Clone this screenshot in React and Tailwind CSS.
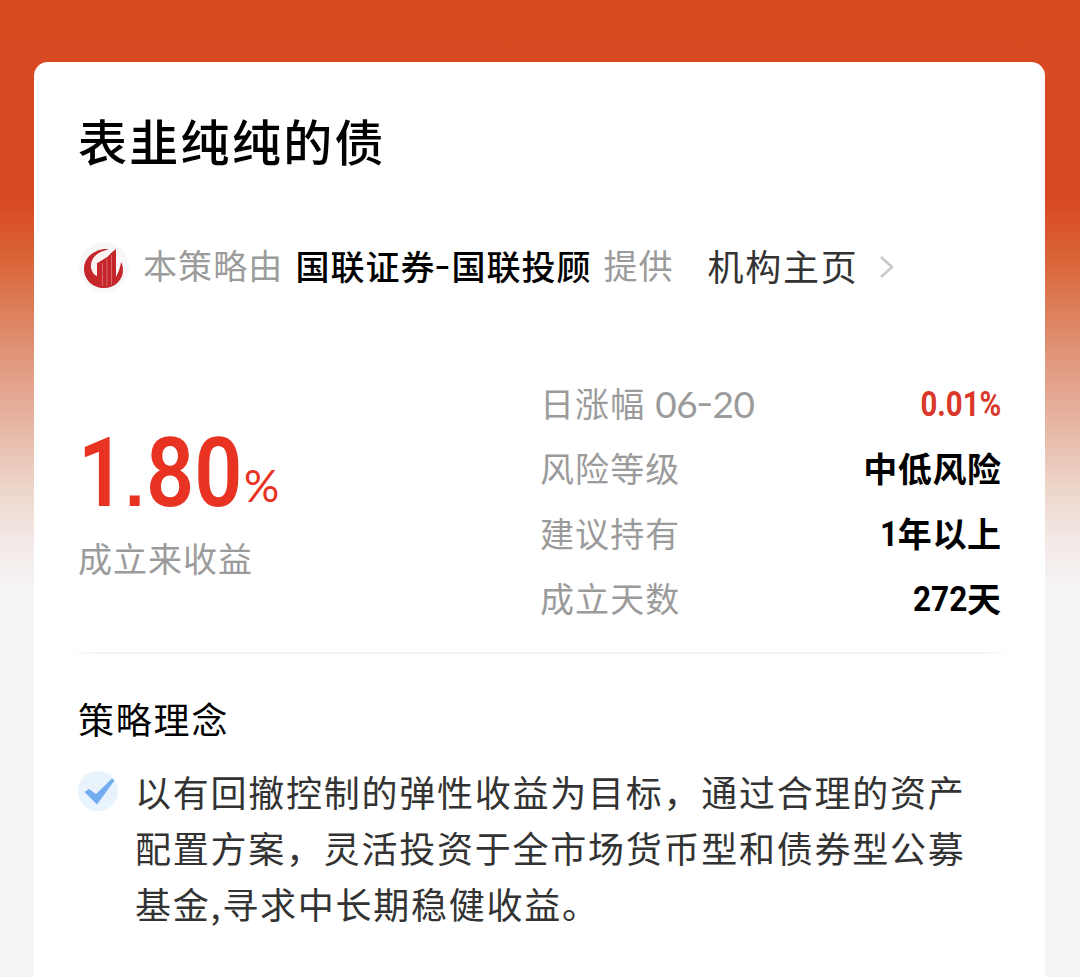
import React from "react";

const stats = [
  { label: "日涨幅", date: ["06", "20"], num: "0.01%", red: true },
  { label: "风险等级", text: "中低风险" },
  { label: "建议持有", num: "1", text: "年以上" },
  { label: "成立天数", num: "272", text: "天" },
];

const idea = [
  "以有回撤控制的弹性收益为目标，通过合理的资产",
  "配置方案，灵活投资于全市场货币型和债券型公募",
  "基金,寻求中长期稳健收益。",
];

function Logo() {
  return (
    <svg className="h-[52px] w-[52px] shrink-0" viewBox="0 0 52 52">
      <circle cx="26" cy="26" r="25" fill="#f8f7f7" />
      <path d="M31 8C17 7 6 16 6 28c0 11 9 19 20 19 11 0 19-8 19-18 0-4-1-6-2-8-1 7-3 11-5 15V8l-5 4-4 4-5 3-5 3v12c-6-6-3-21 12-26z" fill="#c4262b" />
      <path d="M30 9C19 10 12 18 13 27c1 4 3 7 6 8V22l10-6 4-4z" fill="#fbf3f2" />
      <path d="M24.500 22v23M29 18v27M33.500 14v30" stroke="#dd6468" strokeWidth="1" />
    </svg>
  );
}

function Check() {
  return (
    <svg className="mt-[8px] h-10 w-10 shrink-0" viewBox="0 0 40 40">
      <circle cx="20" cy="20" r="20" fill="#e8f3fd" />
      <path d="M6.500 21l4.500-3 7 5L34 7.500l2.500 2L19 33.500z" fill="#72adf0" />
    </svg>
  );
}

export default function App() {
  return (
    <div className="h-[977px] w-[1080px] overflow-hidden bg-[#f5f5f5] bg-[linear-gradient(180deg,#d94922_0px,#d84822_200px,#da6539_260px,#dc7e5a_310px,#e29c84_370px,#e8bdac_440px,#edd6cb_490px,#f3e9e6_540px,#f5f5f5_590px)] pl-[34px] pr-[35px] pt-[62px] font-['Noto_Sans_CJK_SC',sans-serif] whitespace-nowrap text-black">
      <main className="flex h-[930px] flex-col rounded-t-[14px] bg-white px-[44px]">
        <h1 className="mt-[42px] h-[72px] text-[49px] leading-[72px] font-medium tracking-[2.3px]">表韭纯纯的债</h1>

        <div className="mt-[63px] flex h-[56px] items-center text-[34px] leading-[56px]">
          <Logo />
          <span className="-mt-[5px] ml-[13px] text-[#9b9b9b] tracking-[1.1px]">本策略由</span>
          <span className="-mt-[3px] ml-[12px] flex font-medium tracking-[1px]">
            国联证券
            <span className="w-[16px] origin-center -translate-y-[3px] scale-x-130 text-center">-</span>
            国联投顾
          </span>
          <span className="-mt-[5px] ml-[12px] text-[#9b9b9b] tracking-[1px]">提供</span>
          <span className="-mt-[5px] ml-[34px] text-[36px] text-[#333] tracking-[1.8px]">机构主页</span>
          <svg className="ml-[20px] h-6 w-4" viewBox="0 0 16 24" fill="none" stroke="#c9c9c9" strokeWidth="2.500">
            <path d="M2 2l11 10L2 22" />
          </svg>
        </div>

        <div className="mt-[75px] flex h-[262px] justify-between">
          <div className="flex w-[300px] flex-col">
            <div className="mt-[48px] flex h-[100px] items-baseline font-['Roboto',sans-serif] leading-[110px] text-[#e83323]">
              <span className="w-[49px] origin-left scale-x-85 text-[97px] font-semibold">1</span>
              <span className="w-[19px] -translate-x-[2px] font-['Liberation_Sans',sans-serif] text-[70px] font-bold leading-[80px]">.</span>
              <span className="w-[98px] origin-left scale-x-87 text-[97px] font-semibold">80</span>
              <span className="-translate-y-[4px] font-['Lato',sans-serif] text-[44px] leading-[60px]">%</span>
            </div>
            <span className="mt-[15px] text-[34px] leading-[50px] text-[#9b9b9b] tracking-[1px]">成立来收益</span>
          </div>
          <dl className="flex w-[461px] flex-col text-[34px] leading-[65px]">
            {stats.map((s) => (
              <div key={s.label} className="flex h-[65px] justify-between">
                <dt className="flex text-[#9b9b9b] tracking-[1.1px]">
                  {s.label}
                  {s.date && (
                    <span className="ml-[10px] flex translate-y-[1px] font-['Lato',sans-serif] text-[37px] tracking-[-0.4px]">
                      {s.date[0]}
                      <span className="w-[15px] -translate-y-[2px] scale-x-130 text-center">-</span>
                      {s.date[1]}
                    </span>
                  )}
                </dt>
                <dd className={s.red ? "flex text-[#d9382b]" : "flex"}>
                  {s.num && (
                    <span className={s.red
                      ? "origin-right translate-y-[2px] scale-x-84 font-['Roboto',sans-serif] text-[35px] font-bold"
                      : "origin-right translate-y-[2px] scale-x-90 font-['Roboto',sans-serif] text-[35px] font-bold"}>{s.num}</span>
                  )}
                  {s.text && <span className="font-bold tracking-[0.6px] -mr-[0.6px]">{s.text}</span>}
                </dd>
              </div>
            ))}
          </dl>
        </div>

        <div className="-mx-[10px] mt-[20px] h-[2px] shrink-0 bg-[linear-gradient(90deg,#fff,#f4f4f4_3%,#f4f4f4_97%,#fff)]" />

        <h2 className="mt-[37px] h-[54px] text-[36px] leading-[54px] tracking-[1.8px]">策略理念</h2>
        <div className="mt-[18px] flex">
          <Check />
          <p className="ml-[17px] text-[36px] leading-[56px] text-[#333] tracking-[1.75px]">
            {idea.map((line) => (
              <span key={line} className="block">{line}</span>
            ))}
          </p>
        </div>
      </main>
    </div>
  );
}
